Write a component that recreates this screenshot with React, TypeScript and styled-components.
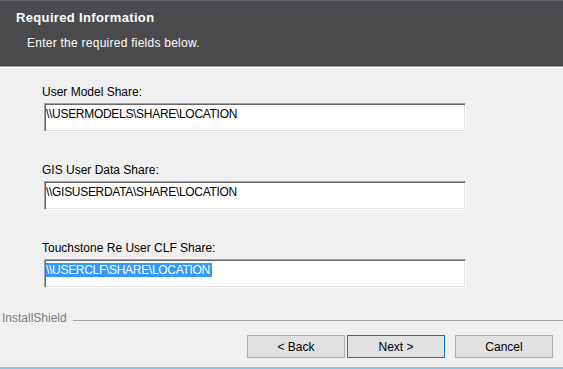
import styled, { createGlobalStyle } from "styled-components";

const GlobalStyle = createGlobalStyle`
  html, body {
    margin: 0;
    padding: 0;
    background: #f0f0f0;
  }
  body {
    font-family: "Liberation Sans", Arial, sans-serif;
    font-size: 12px;
    color: #000000;
  }
`;

const Window = styled.div`
  width: 563px;
  height: 369px;
  box-sizing: border-box;
  display: flex;
  flex-direction: column;
  background: #f0f0f0;
  border-bottom: 2px solid #8ec6e2;
  overflow: hidden;
`;

const Header = styled.header`
  height: 67px;
  box-sizing: border-box;
  padding: 9px 0 0 16px;
  background: #4b4b4d;
  border-top: 1px solid #62676d;
  border-bottom: 1px solid #a0a0a0;
  color: #ffffff;
`;

const Title = styled.div`
  font-size: 13px;
  font-weight: bold;
  line-height: 15px;
  letter-spacing: 0.35px;
`;

const Subtitle = styled.div`
  margin: 11px 0 0 11px;
  font-size: 12px;
  line-height: 14px;
  letter-spacing: 0.25px;
`;

const Body = styled.main`
  flex: 1;
  display: flex;
  flex-direction: column;
  gap: 31px;
  padding: 17px 0 0 42px;
  border-top: 1px solid #ffffff;
`;

const Field = styled.div`
  display: flex;
  flex-direction: column;
  gap: 4px;
`;

const Label = styled.label`
  line-height: 14px;
`;

const TextBox = styled.div`
  width: 422px;
  height: 29px;
  box-sizing: border-box;
  margin-left: 2px;
  padding: 3px 0 0 1px;
  background: #ffffff;
  border: 1px solid;
  border-color: #a0a0a0 #ffffff #ffffff #a0a0a0;
  box-shadow: inset 1px 1px 0 #696969, inset -1px -1px 0 #e3e3e3;
  line-height: 14px;
  letter-spacing: -0.3px;
  white-space: nowrap;
`;

const Selected = styled.span`
  display: inline-block;
  padding-right: 2px;
  background: #3399ff;
  color: #ffffff;
`;

const Footer = styled.footer`
  display: flex;
  flex-direction: column;
  gap: 10px;
  padding-bottom: 9px;
`;

const Brand = styled.div`
  display: flex;
  align-items: center;
  gap: 6px;
  padding-left: 2px;
  line-height: 14px;
  color: #7d7d7d;
`;

const BrandRule = styled.div`
  flex: 1;
  height: 1px;
  margin-top: 4px;
  background: #a0a0a0;
`;

const Buttons = styled.div`
  display: flex;
  justify-content: flex-end;
  padding-right: 10px;
`;

const Button = styled.button<{ $default?: boolean; $gap?: number }>`
  width: 98px;
  height: 23px;
  margin-left: ${(p) => p.$gap ?? 0}px;
  padding: 0;
  background: #e1e1e1;
  border: 1px solid ${(p) => (p.$default ? "#0078d7" : "#adadad")};
  font-family: "Liberation Sans", Arial, sans-serif;
  font-size: 12px;
  color: #000000;
`;

const fields = [
  { label: "User Model Share:", value: "\\\\USERMODELS\\SHARE\\LOCATION" },
  { label: "GIS User Data Share:", value: "\\\\GISUSERDATA\\SHARE\\LOCATION" },
  {
    label: "Touchstone Re User CLF Share:",
    value: "\\\\USERCLF\\SHARE\\LOCATION",
    selected: true,
  },
];

export default function App() {
  return (
    <>
      <GlobalStyle />
      <Window>
        <Header>
          <Title>Required Information</Title>
          <Subtitle>Enter the required fields below.</Subtitle>
        </Header>
        <Body>
          {fields.map((f) => (
            <Field key={f.label}>
              <Label>{f.label}</Label>
              <TextBox>
                {f.selected ? <Selected>{f.value}</Selected> : f.value}
              </TextBox>
            </Field>
          ))}
        </Body>
        <Footer>
          <Brand>
            InstallShield
            <BrandRule />
          </Brand>
          <Buttons>
            <Button>&lt; Back</Button>
            <Button $default $gap={2}>
              Next &gt;
            </Button>
            <Button $gap={10}>Cancel</Button>
          </Buttons>
        </Footer>
      </Window>
    </>
  );
}
